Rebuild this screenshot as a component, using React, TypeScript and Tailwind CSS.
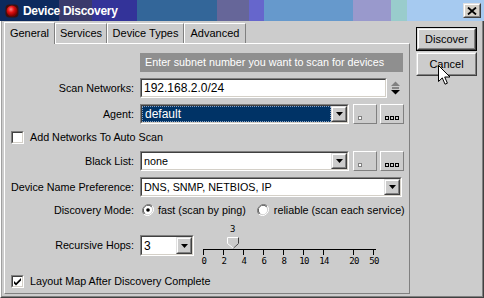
import React from 'react';

const raisedOuter = 'border border-t-[#e0e0e0] border-l-[#e0e0e0] border-b-[#404040] border-r-[#404040]';
const raisedInner = 'border border-t-white border-l-white border-b-[#808080] border-r-[#808080]';

function Sunken({ className = '', inner = 'bg-white', children }: { className?: string; inner?: string; children?: React.ReactNode }) {
  return (
    <div className={`border border-t-[#808080] border-l-[#808080] border-b-white border-r-white ${className}`}>
      <div className={`h-full flex items-stretch border border-t-[#404040] border-l-[#404040] border-b-[#d4d0c8] border-r-[#d4d0c8] ${inner}`}>
        {children}
      </div>
    </div>
  );
}

function DropBtn() {
  return (
    <div className={`w-[16px] shrink-0 bg-[#cccccc] ${raisedOuter}`}>
      <div className={`h-full flex items-center justify-center ${raisedInner}`}>
        <svg width="7" height="4" viewBox="0 0 7 4">
          <path d="M0 0h7L3.5 4z" fill="#000" />
        </svg>
      </div>
    </div>
  );
}

function SmallBtn({ dots }: { dots: number }) {
  return (
    <div className="w-[24px] h-[20px] bg-[#cccccc] border border-t-white border-l-white border-b-[#808080] border-r-[#808080]">
      <div className={`h-full flex items-end pb-[3px] ${dots === 1 ? 'justify-start pl-[4px]' : 'justify-center gap-[1px]'}`}>
        {Array.from({ length: dots }).map((_, i) => (
          <div key={i} className={`w-[4px] h-[4px] border ${dots === 1 ? 'border-[#808080] bg-white' : 'border-black'}`} />
        ))}
      </div>
    </div>
  );
}

function Label({ children }: { children: React.ReactNode }) {
  return <div className="w-[129px] shrink-0 flex items-center justify-end">{children}</div>;
}

function Checkbox({ checked }: { checked?: boolean }) {
  return (
    <Sunken className="w-[13px] h-[13px] shrink-0">
      {checked && (
        <svg width="9" height="9" viewBox="0 0 9 9" className="m-auto">
          <path d="M1 4l2 2 5-5v2.5l-5 5-2-2z" fill="#000" />
        </svg>
      )}
    </Sunken>
  );
}

function Radio({ on }: { on?: boolean }) {
  return (
    <svg width="12" height="12" viewBox="0 0 12 12" className="shrink-0">
      <path d="M10.2 1.8A6 6 0 0 0 1.8 10.2" fill="none" stroke="#808080" />
      <path d="M9.5 2.5A5 5 0 0 0 2.5 9.5" fill="none" stroke="#404040" />
      <path d="M1.8 10.2A6 6 0 0 0 10.2 1.8" fill="none" stroke="#fff" />
      <circle cx="6" cy="6" r="4.2" fill="#fff" />
      {on && <circle cx="6" cy="6" r="1.8" fill="#000" />}
    </svg>
  );
}

function Slider() {
  const ticks = [0, 20, 40, 60, 80, 100, 120, 150, 170];
  const labels = ['0', '2', '4', '6', '8', '10', '14', '20', '50'];
  return (
    <div className="relative w-[176px] h-[34px] font-['DejaVu_Sans_Mono',monospace] text-[9px] tracking-[-0.6px]">
      <span className="absolute left-[27px] top-[1px] leading-none">3</span>
      <svg width="176" height="34" className="absolute left-0 top-0">
        <line x1="0" y1="25.5" x2="173" y2="25.5" stroke="#000" />
        {ticks.map((t) => (
          <line key={t} x1={t + 0.5} y1="25" x2={t + 0.5} y2="31" stroke="#000" />
        ))}
        <path d="M24.5 13.5h11v6l-5 4h-1l-5-4z" fill="#cccccc" stroke="#fff" />
        <path d="M35.5 13.5v6l-5 4.5" fill="none" stroke="#404040" />
      </svg>
      {ticks.map((t, i) => (
        <span key={t} className="absolute top-[33px] leading-none -translate-x-1/2" style={{ left: t + 1 }}>
          {labels[i]}
        </span>
      ))}
    </div>
  );
}

export default function App() {
  return (
    <div className="relative w-[484px] h-[298px] overflow-hidden bg-[#cccccc] font-['Liberation_Sans',Arial,sans-serif] text-[10.75px] text-black flex flex-col select-none">
      {/* title bar */}
      <div className="h-[21px] shrink-0 flex items-center bg-[linear-gradient(90deg,#0c2a5e_0px_59px,#3a3a6c_59px_92px,#333399_92px_137px,#336699_137px_217px,#666699_217px_249px,#6666cc_249px_264px,#6699cc_264px_353px,#9999cc_353px_391px,#99cccc_391px_407px,#a6caf0_407px)]">
        <svg width="14" height="14" viewBox="0 0 14 14" className="ml-[5px]">
          <defs>
            <radialGradient id="gem" cx="0.4" cy="0.35" r="0.6">
              <stop offset="0" stopColor="#ff8080" />
              <stop offset="0.5" stopColor="#e01010" />
              <stop offset="1" stopColor="#800000" />
            </radialGradient>
          </defs>
          <rect x="0.5" y="0.5" width="13" height="13" rx="4" fill="#3a1010" />
          <circle cx="7" cy="7" r="5.5" fill="url(#gem)" />
        </svg>
        <span className="ml-[4px] text-white font-bold text-[12px] tracking-[-0.3px]">Device Discovery</span>
        <div className={`ml-auto mr-[3px] w-[18px] h-[15px] bg-[#d4d0c8] ${raisedOuter}`}>
          <div className={`h-full flex items-center justify-center ${raisedInner}`}>
            <svg width="10" height="8" viewBox="0 0 10 8">
              <path d="M1 0.5l8 7M9 0.5l-8 7" stroke="#000" strokeWidth="1.8" />
            </svg>
          </div>
        </div>
      </div>

      {/* window body */}
      <div className="flex-1 flex border-l border-l-white border-r border-r-[#404040] border-b border-b-[#404040]">
        <div className="flex-1 flex pl-[2px] border-l border-l-[#a0a0a0] border-r border-r-[#808080] border-b border-b-[#808080]">
          <div className="w-[406px] shrink-0 flex flex-col">
            {/* tabs */}
            <div className="h-[22px] flex items-end relative z-10 text-[11px]">
              <div className="w-[51px] h-[22px] -mb-px bg-[#cccccc] border-l border-t border-white border-r border-r-[#808080] flex items-center justify-center pb-[1px]">
                General
              </div>
              <div className="w-[52px] h-[20px] border-l border-t border-white border-r border-r-[#808080] flex items-center justify-center">
                Services
              </div>
              <div className="w-[77px] h-[20px] border-l border-t border-white border-r border-r-[#808080] flex items-center justify-center">
                Device Types
              </div>
              <div className="w-[62px] h-[20px] border-l border-t border-white border-r border-r-[#808080] flex items-center justify-center">
                Advanced
              </div>
            </div>

            {/* panel */}
            <div className="flex-1 mb-[2px] border-t border-l border-white border-r border-b border-r-[#808080] border-b-[#808080] flex flex-col">
              <div className="ml-[135px] mt-[9px] w-[263px] h-[19px] bg-[#8f8f8f] text-white flex items-center pl-[5px]">
                Enter subnet number you want to scan for devices
              </div>

              <div className="mt-[6px] h-[20px] flex">
                <Label>Scan Networks:</Label>
                <Sunken className="ml-[6px] w-[247px]">
                  <span className="pl-[2px] flex items-center text-[12px]">192.168.2.0/24</span>
                </Sunken>
                <svg width="11" height="14" viewBox="0 0 11 14" className="ml-[3px] mt-[3px]">
                  <path d="M1 5h9L5.5 0.5z" fill="#808080" />
                  <path d="M2 7h7" stroke="#404040" />
                  <path d="M1 9h9L5.5 13.5z" fill="#000" />
                </svg>
              </div>

              <div className="mt-[6px] h-[20px] flex">
                <Label>Agent:</Label>
                <Sunken className="ml-[6px] w-[209px]" inner="bg-white border-t-[#000] border-l-[#000]">
                  <div className="flex-1 bg-[#003366] text-white flex items-center pl-[2px] border border-dotted border-[#8aa0c0] text-[12px]">default</div>
                  <DropBtn />
                </Sunken>
                <div className="ml-[4px]"><SmallBtn dots={1} /></div>
                <div className="ml-[3px]"><SmallBtn dots={3} /></div>
              </div>

              <div className="mt-[7px] h-[13px] flex items-center ml-[6px] gap-[6px]">
                <Checkbox />
                <span>Add Networks To Auto Scan</span>
              </div>

              <div className="mt-[7px] h-[20px] flex">
                <Label>Black List:</Label>
                <Sunken className="ml-[6px] w-[209px]">
                  <span className="flex-1 pl-[2px] flex items-center">none</span>
                  <DropBtn />
                </Sunken>
                <div className="ml-[4px]"><SmallBtn dots={1} /></div>
                <div className="ml-[3px]"><SmallBtn dots={3} /></div>
              </div>

              <div className="mt-[6px] h-[20px] flex">
                <Label>Device Name Preference:</Label>
                <Sunken className="ml-[6px] w-[262px]">
                  <span className="flex-1 pl-[2px] flex items-center">DNS, SNMP, NETBIOS, IP</span>
                  <DropBtn />
                </Sunken>
              </div>

              <div className="mt-[6px] h-[14px] flex items-center">
                <Label>Discovery Mode:</Label>
                <div className="ml-[8px] flex items-center gap-[4px]">
                  <Radio on />
                  <span>fast (scan by ping)</span>
                </div>
                <div className="ml-[11px] flex items-center gap-[5px]">
                  <Radio />
                  <span>reliable (scan each service)</span>
                </div>
              </div>

              <div className="mt-[7px] h-[34px] flex">
                <div className="w-[129px] shrink-0 mt-[11px] h-[21px] flex items-center justify-end">Recursive Hops:</div>
                <Sunken className="ml-[6px] mt-[11px] w-[54px] h-[21px]">
                  <span className="flex-1 pl-[2px] flex items-center text-[12px]">3</span>
                  <DropBtn />
                </Sunken>
                <div className="ml-[9px]">
                  <Slider />
                </div>
              </div>

              <div className="mt-[17px] h-[13px] flex items-center ml-[6px] gap-[6px]">
                <Checkbox checked />
                <span>Layout Map After Discovery Complete</span>
              </div>
            </div>
          </div>

          {/* buttons */}
          <div className="flex-1 flex flex-col pl-[6px] pt-[6px] text-[11px]">
            <div className="w-[61px] h-[24px] border border-black">
              <div className={`h-full bg-[#cccccc] ${raisedOuter}`}>
                <div className={`h-full flex items-center justify-center ${raisedInner}`}>Discover</div>
              </div>
            </div>
            <div className={`mt-[1px] w-[61px] h-[24px] bg-[#cccccc] ${raisedOuter}`}>
              <div className={`h-full flex items-center justify-center ${raisedInner}`}>Cancel</div>
            </div>
          </div>
        </div>
      </div>

      {/* mouse pointer */}
      <svg width="13" height="21" viewBox="0 0 13 21" className="absolute left-[438px] top-[65px]">
        <path d="M0.5 0.5v16l3.8-3.6 2.7 6.3 2.4-1-2.7-6.2h5.3z" fill="#fff" stroke="#000" />
      </svg>
    </div>
  );
}
